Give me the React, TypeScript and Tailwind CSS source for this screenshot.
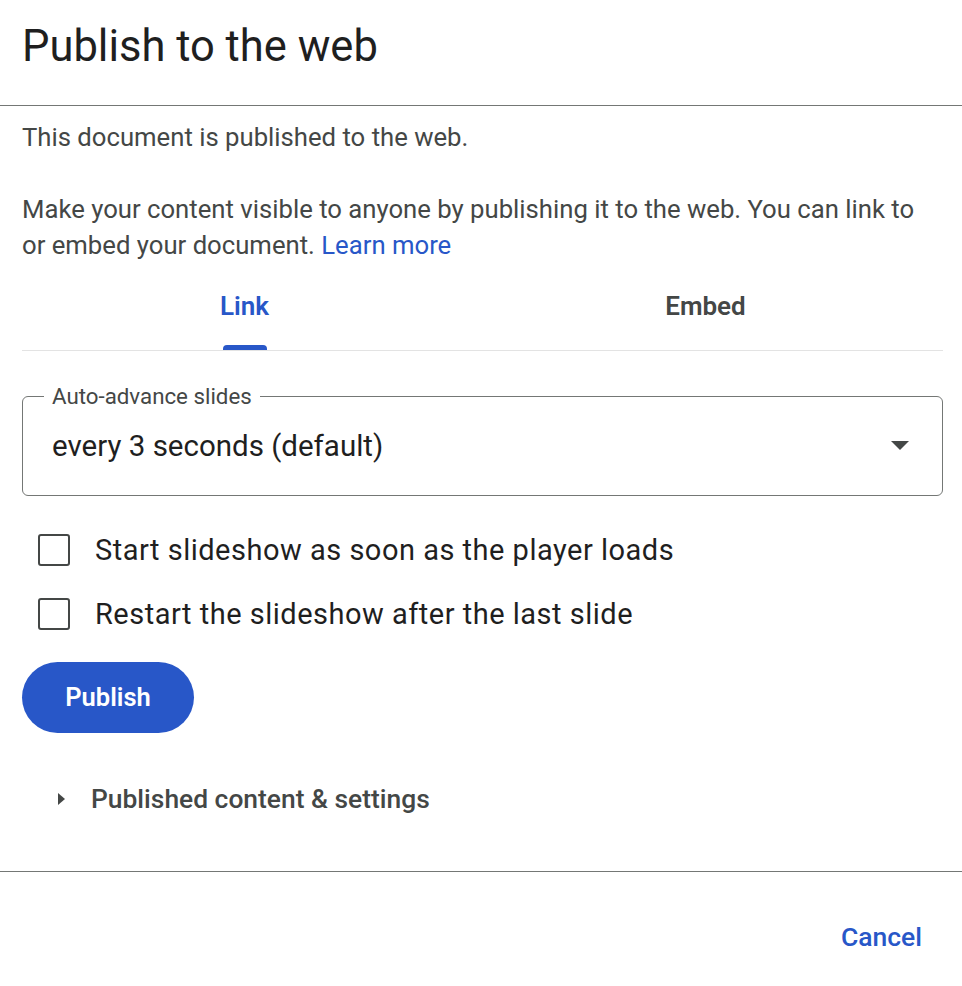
import React, { useState } from 'react';

export default function App() {
    const [tab, setTab] = useState<'link' | 'embed'>('link');
    const [startOnLoad, setStartOnLoad] = useState(false);
    const [restart, setRestart] = useState(false);

    return (
        <div className="w-[962px] h-[986px] bg-white text-[#1f1f1f] font-['Roboto',sans-serif]">
            {/* Header */}
            <div className="h-[106px] border-b border-[#747775] px-[22px] pt-[21px]">
                <h1 className="text-[43.5px] leading-[52px] font-normal text-[#1f1f1f]">Publish to the web</h1>
            </div>

            {/* Body */}
            <div className="pl-[22px] pr-[19px] pt-[13px]">
                <p className="text-[25.7px] leading-[36px] text-[#444746]">This document is published to the web.</p>
                <p className="mt-[36px] text-[25.7px] leading-[36px] text-[#444746]">
                    Make your content visible to anyone by publishing it to the web. You can link to or embed your document.{' '}
                    <a href="#" className="text-[#2857c8]">Learn more</a>
                </p>

                {/* Tabs */}
                <div className="border-b border-[#e3e3e3]">
                    <div className="grid grid-cols-2 -ml-2 w-[922px]">
                        <button onClick={() => setTab('link')} className="flex flex-col items-center pt-[25px]">
                            <span className={`text-[26px] leading-[36px] font-semibold ${tab === 'link' ? 'text-[#2857c8]' : 'text-[#444746]'}`}>Link</span>
                            <span className={`mt-[21px] h-[5px] w-[44px] rounded-t-[4px] ${tab === 'link' ? 'bg-[#2857c8]' : 'bg-transparent'}`}></span>
                        </button>
                        <button onClick={() => setTab('embed')} className="flex flex-col items-center pt-[25px]">
                            <span className={`text-[26px] leading-[36px] font-semibold ${tab === 'embed' ? 'text-[#2857c8]' : 'text-[#444746]'}`}>Embed</span>
                            <span className={`mt-[21px] h-[5px] w-[80px] rounded-t-[4px] ${tab === 'embed' ? 'bg-[#2857c8]' : 'bg-transparent'}`}></span>
                        </button>
                    </div>
                </div>

                {/* Auto-advance select */}
                <div className="relative mt-[45px] h-[100px] border border-[#747775] rounded-[6px] flex items-center justify-between pl-[29px] pr-[33px]">
                    <span className="absolute -top-[13px] left-[21px] bg-white px-[8px] text-[22.3px] leading-[24px] text-[#444746]">Auto-advance slides</span>
                    <span className="text-[29.5px] leading-[36px] text-[#1f1f1f]">every 3 seconds (default)</span>
                    <svg width="18" height="9" viewBox="0 0 18 9" className="mb-[2px]">
                        <path d="M0 0 L18 0 L9 9 Z" fill="#444746" />
                    </svg>
                </div>

                {/* Checkboxes */}
                <div className="mt-[22px]">
                    {[
                        { label: 'Start slideshow as soon as the player loads', checked: startOnLoad, set: setStartOnLoad },
                        { label: 'Restart the slideshow after the last slide', checked: restart, set: setRestart },
                    ].map((row) => (
                        <label key={row.label} className="flex items-center h-[64px] pl-[16px] gap-[25px] cursor-pointer">
                            <span
                                onClick={() => row.set(!row.checked)}
                                className={`w-[32px] h-[32px] rounded-[3px] border-[2.5px] ${row.checked ? 'border-[#2857c8] bg-[#2857c8]' : 'border-[#444746]'}`}
                            ></span>
                            <span className="text-[29px] leading-[36px] tracking-[0.5px] text-[#1f1f1f]">{row.label}</span>
                        </label>
                    ))}
                </div>

                {/* Publish */}
                <button className="mt-[16px] w-[172px] h-[71px] rounded-full bg-[#2857c8] text-white text-[25.5px] font-semibold">
                    Publish
                </button>

                {/* Expander */}
                <div className="mt-[42px] h-[48px] flex items-center pl-[36px] gap-[26px]">
                    <svg width="7" height="12" viewBox="0 0 7 12">
                        <path d="M0 0 L7 6 L0 12 Z" fill="#444746" />
                    </svg>
                    <span className="text-[26.4px] leading-[36px] font-medium text-[#444746]">Published content &amp; settings</span>
                </div>
            </div>

            {/* Footer */}
            <div className="mt-[48px] border-t border-[#747775] flex justify-end pr-[40px] pt-[47px]">
                <button className="text-[26.5px] leading-[36px] font-medium text-[#2857c8]">Cancel</button>
            </div>
        </div>
    );
}
